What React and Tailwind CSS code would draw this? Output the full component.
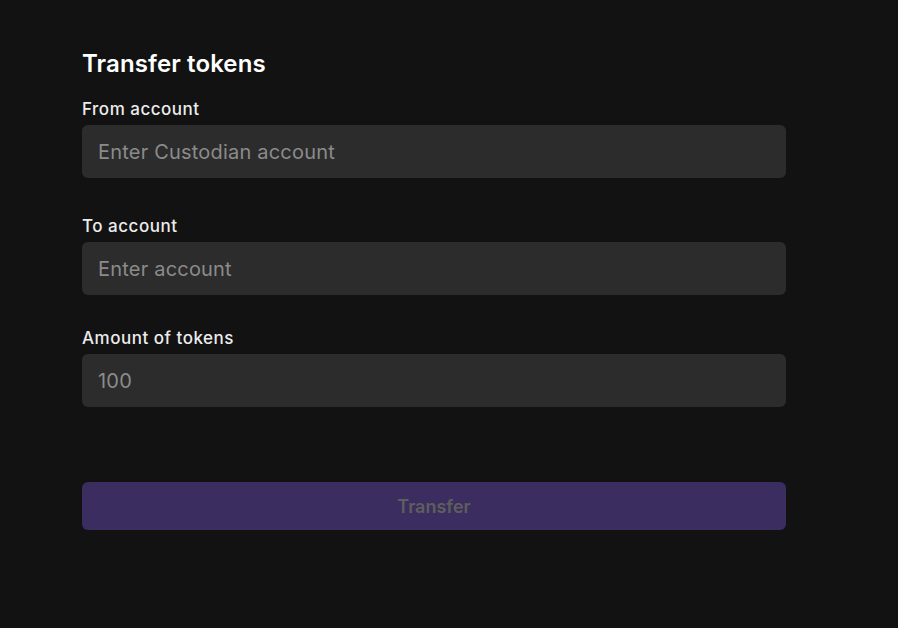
import React, { useState } from "react";

// Formulaire de transfert de jetons
const Field = ({ label, placeholder, value, onChange, className }) => (
  <div className={className}>
    <label className="block pb-[4px] text-[17px] leading-6 font-medium tracking-[0.03em] text-[#ececec]">
      {label}
    </label>
    <input
      value={value}
      onChange={(e) => onChange(e.target.value)}
      placeholder={placeholder}
      className="block w-full h-[53px] rounded-md bg-[#2c2c2c] px-4 text-[20px] tracking-[0.01em] text-[#e0e0e0] placeholder:text-[#8b8b8b] outline-none"
    />
  </div>
);

const App = () => {
  const [from, setFrom] = useState("");
  const [to, setTo] = useState("");
  const [amount, setAmount] = useState("");

  return (
    <div
      className="min-h-[628px] w-full bg-[#121212] pt-[48px]"
      style={{ fontFamily: "Inter, 'Noto Sans', sans-serif" }}
    >
      <div className="ml-[82px] w-[704px]">
        <h1 className="text-[24px] leading-8 font-semibold tracking-[0.005em] text-white">
          Transfer tokens
        </h1>
        <Field
          className="mt-[17px]"
          label="From account"
          placeholder="Enter Custodian account"
          value={from}
          onChange={setFrom}
        />
        <Field
          className="mt-[36px]"
          label="To account"
          placeholder="Enter account"
          value={to}
          onChange={setTo}
        />
        <Field
          className="mt-[31px]"
          label="Amount of tokens"
          placeholder="100"
          value={amount}
          onChange={setAmount}
        />
        <button
          disabled
          className="mt-[75px] block w-full h-[48px] rounded-md bg-[#3b2d5f] text-[18px] font-semibold text-[#5e5e5e]"
        >
          Transfer
        </button>
      </div>
    </div>
  );
};

export default App;
